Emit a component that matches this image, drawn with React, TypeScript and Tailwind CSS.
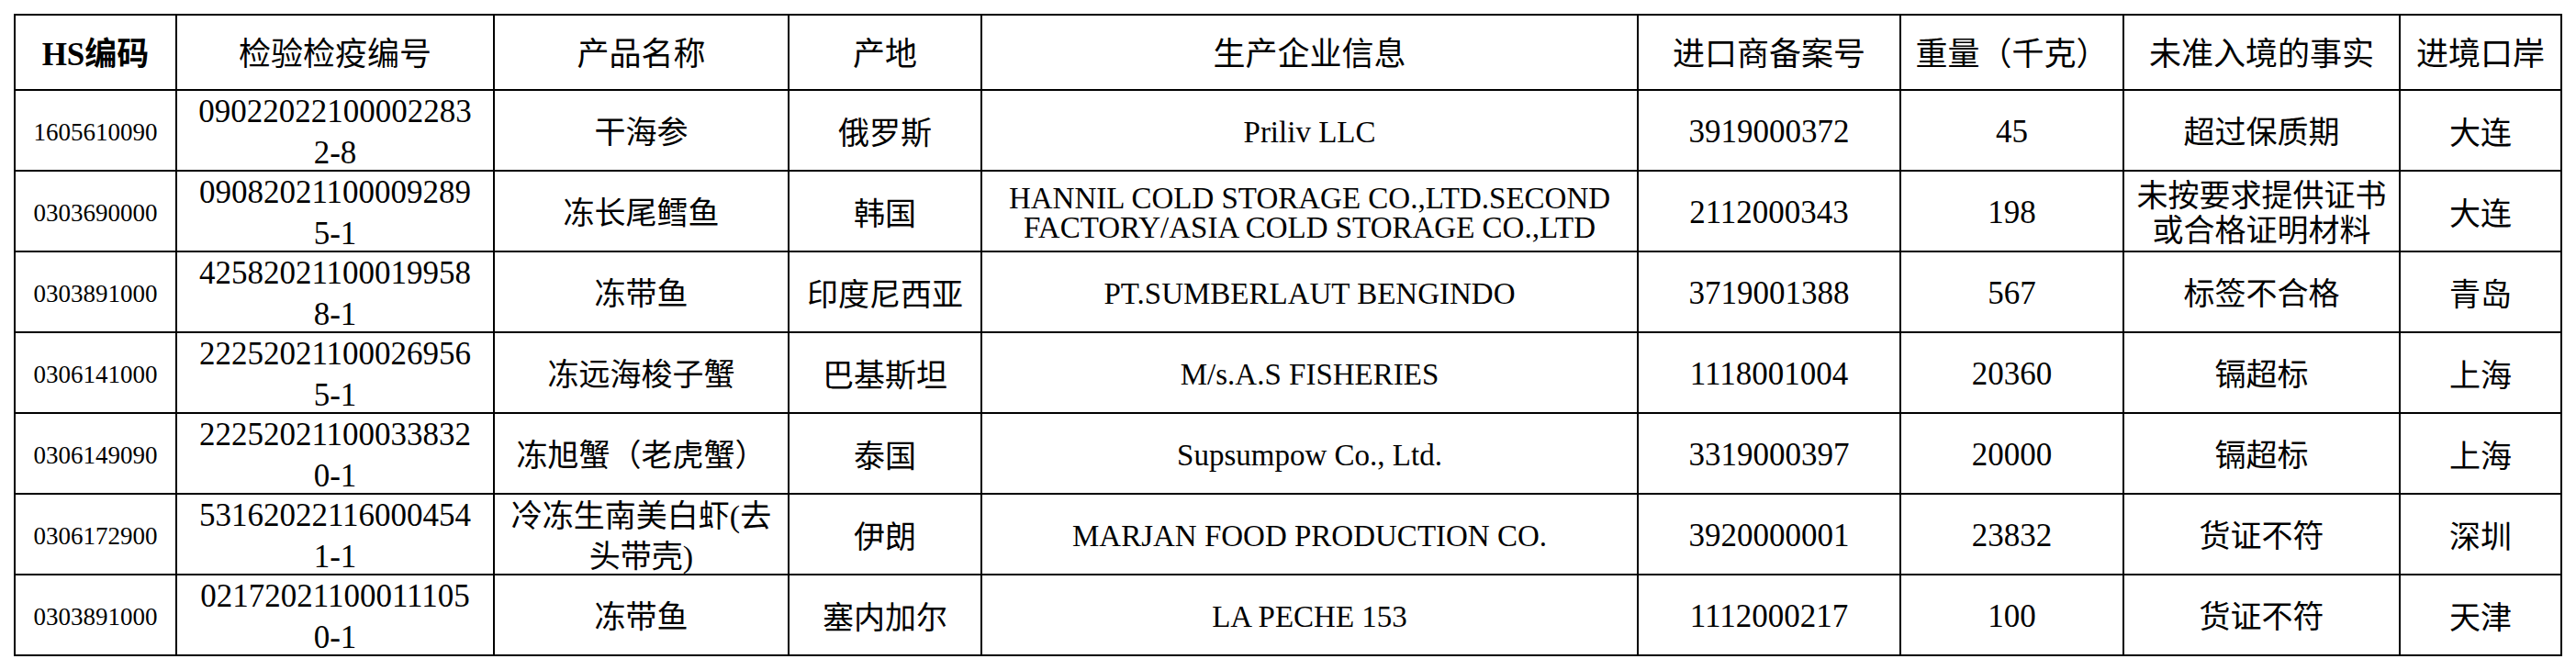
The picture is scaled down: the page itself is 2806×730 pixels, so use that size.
import { FC } from "react";

type Row = {
  hs: string;
  id: string[];
  name: string[];
  origin: string;
  company: string[];
  record: string;
  weight: string;
  fact: string[];
  port: string;
};

const rows: Row[] = [
  {
    hs: "1605610090",
    id: ["09022022100002283", "2-8"],
    name: ["干海参"],
    origin: "俄罗斯",
    company: ["Priliv LLC"],
    record: "3919000372",
    weight: "45",
    fact: ["超过保质期"],
    port: "大连",
  },
  {
    hs: "0303690000",
    id: ["09082021100009289", "5-1"],
    name: ["冻长尾鳕鱼"],
    origin: "韩国",
    company: ["HANNIL COLD STORAGE CO.,LTD.SECOND", "FACTORY/ASIA COLD STORAGE CO.,LTD"],
    record: "2112000343",
    weight: "198",
    fact: ["未按要求提供证书", "或合格证明材料"],
    port: "大连",
  },
  {
    hs: "0303891000",
    id: ["42582021100019958", "8-1"],
    name: ["冻带鱼"],
    origin: "印度尼西亚",
    company: ["PT.SUMBERLAUT BENGINDO"],
    record: "3719001388",
    weight: "567",
    fact: ["标签不合格"],
    port: "青岛",
  },
  {
    hs: "0306141000",
    id: ["22252021100026956", "5-1"],
    name: ["冻远海梭子蟹"],
    origin: "巴基斯坦",
    company: ["M/s.A.S FISHERIES"],
    record: "1118001004",
    weight: "20360",
    fact: ["镉超标"],
    port: "上海",
  },
  {
    hs: "0306149090",
    id: ["22252021100033832", "0-1"],
    name: ["冻旭蟹（老虎蟹）"],
    origin: "泰国",
    company: ["Supsumpow Co., Ltd."],
    record: "3319000397",
    weight: "20000",
    fact: ["镉超标"],
    port: "上海",
  },
  {
    hs: "0306172900",
    id: ["53162022116000454", "1-1"],
    name: ["冷冻生南美白虾(去", "头带壳)"],
    origin: "伊朗",
    company: ["MARJAN FOOD PRODUCTION CO."],
    record: "3920000001",
    weight: "23832",
    fact: ["货证不符"],
    port: "深圳",
  },
  {
    hs: "0303891000",
    id: ["02172021100011105", "0-1"],
    name: ["冻带鱼"],
    origin: "塞内加尔",
    company: ["LA PECHE 153"],
    record: "1112000217",
    weight: "100",
    fact: ["货证不符"],
    port: "天津",
  },
];

const headers = [
  "检验检疫编号",
  "产品名称",
  "产地",
  "生产企业信息",
  "进口商备案号",
  "重量（千克）",
  "未准入境的事实",
  "进境口岸",
];

const cell = "bg-white flex flex-col items-center justify-center text-center whitespace-nowrap";

const Lines: FC<{ lines: string[] }> = ({ lines }) => (
  <>
    {lines.map((l, i) => (
      <span key={i} className="block">
        {l}
      </span>
    ))}
  </>
);

const App: FC = () => {
  return (
    <div
      className="w-[2806px] h-[730px] bg-white text-black pt-[15px] pl-[15px]"
      style={{ fontFamily: '"Liberation Serif", "Noto Sans CJK SC", serif' }}
    >
      <div className="inline-grid grid-cols-[174px_344px_319px_208px_713px_284px_241px_299px_174px] grid-rows-[80px_repeat(7,86px)] gap-[2px] p-[2px] bg-black">
        {/* header */}
        <div className={`${cell} text-[35px] pt-[6px] font-bold`}>HS编码</div>
        {headers.map((h) => (
          <div key={h} className={`${cell} text-[35px] pt-[6px] font-normal`}>
            {h}
          </div>
        ))}

        {/* rows */}
        {rows.map((r, i) => (
          <div key={i} className="contents">
            <div className={`${cell} text-[27px] pt-[4px]`}>{r.hs}</div>
            <div className={`${cell} text-[35px] leading-[45px] pt-[4px]`}>
              <Lines lines={r.id} />
            </div>
            <div className={`${cell} text-[34px] leading-[44px] pt-[6px]`}>
              <Lines lines={r.name} />
            </div>
            <div className={`${cell} text-[34px] pt-[6px]`}>{r.origin}</div>
            <div className={`${cell} text-[33px] leading-[32px] pt-[4px]`}>
              <Lines lines={r.company} />
            </div>
            <div className={`${cell} text-[35px] pt-[4px]`}>{r.record}</div>
            <div className={`${cell} text-[35px] pt-[4px]`}>{r.weight}</div>
            <div className={`${cell} text-[34px] leading-[38px] pt-[6px]`}>
              <Lines lines={r.fact} />
            </div>
            <div className={`${cell} text-[34px] pt-[6px]`}>{r.port}</div>
          </div>
        ))}
      </div>
    </div>
  );
};

export default App;
